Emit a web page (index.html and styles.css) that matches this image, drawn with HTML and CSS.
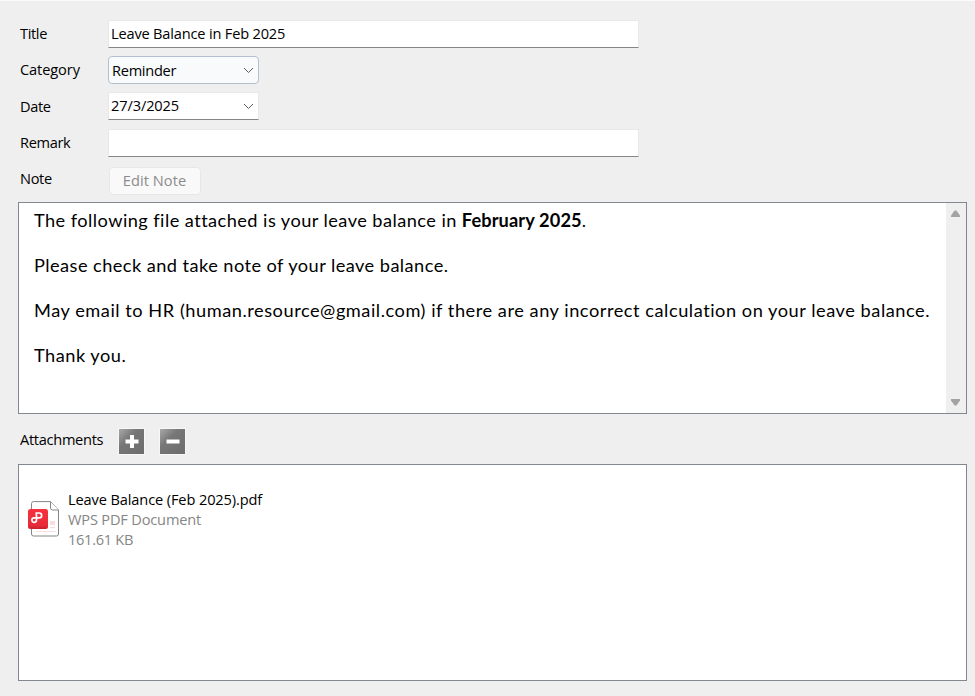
FILE: index.html
```
<!DOCTYPE html>
<html lang="en">
<head>
<meta charset="utf-8">
<title>Leave Balance</title>
<link rel="stylesheet" href="styles.css">
</head>
<body>
<main class="form">
  <div class="row title-row"><label class="label">Title</label><div class="field wide"><span class="t-title">Leave Balance in Feb 2025</span></div></div>
  <div class="row category-row"><label class="label t-category">Category</label><div class="select"><span class="t-reminder">Reminder</span><svg class="chevron" viewBox="0 0 11 7"><path d="M1 1l4.500 4.500L10 1"/></svg></div></div>
  <div class="row date-row"><label class="label">Date</label><div class="field date"><span class="t-date">27/3/2025</span><svg class="chevron" viewBox="0 0 11 7"><path d="M1 1l4.500 4.500L10 1"/></svg></div></div>
  <div class="row remark-row"><label class="label">Remark</label><div class="field wide"></div></div>
  <div class="row note-row"><label class="label">Note</label><button class="edit" disabled>Edit Note</button></div>

  <section class="note">
    <div class="note-body">
      <p><span class="n1">The following file attached is your leave balance in</span> <b>February 2025</b>.</p>
      <p><span class="n2">Please check and take note of your leave balance.</span></p>
      <p><span class="n3">May email to HR (human.resource@gmail.com) if there are any incorrect calculation on your leave balance.</span></p>
      <p><span class="n4">Thank you.</span></p>
    </div>
    <div class="scrollbar">
      <svg class="arrow" viewBox="0 0 9 7"><path d="M3.600.5h1.800L9 5.500V7H0V5.500z"/></svg>
      <svg class="arrow" viewBox="0 0 9 7"><path d="M3.600 6.500h1.800L9 1.500V0H0v1.500z"/></svg>
    </div>
  </section>

  <div class="attach-head">
    <span class="attach-label">Attachments</span>
    <button class="tool"><svg viewBox="0 0 25 25"><path d="M6.500 12.500h13M13 6v13"/></svg></button>
    <button class="tool"><svg viewBox="0 0 25 25"><path d="M6.500 12.500h13"/></svg></button>
  </div>

  <section class="files">
    <svg class="pdf" viewBox="0 0 32 36">
      <defs><linearGradient id="red" x2="0" y2="1"><stop offset="0" stop-color="#f7303e"/><stop offset=".82" stop-color="#e72b39"/><stop offset="1" stop-color="#c91f2c"/></linearGradient></defs>
      <path class="page" d="M5.500.6h17L30.500 9v24a2 2 0 0 1-2 2h-23a2 2 0 0 1-2-2V2.600a2 2 0 0 1 2-2z"/>
      <path class="fold" d="M22.500.8V7a2 2 0 0 0 2 2h6"/>
      <path class="lines" d="M8 30.500h19.500"/>
      <path class="block" d="M22 20h5v4h-5zM22 26h5v1.200h-5z"/>
      <rect y="8" width="20" height="20" rx="2.500" fill="url(#red)"/>
      <path class="mark" d="M8.100 16.800H6.200a2.300 2.300 0 1 0 2.300 2.300V14M8.300 14.500V12H11.200a2.400 2.400 0 0 1 0 4.900H8.300"/>
    </svg>
    <div class="meta"><span class="f1">Leave Balance (Feb 2025).pdf</span><span class="f2">WPS PDF Document</span><span class="f3">161.61 KB</span></div>
  </section>
</main>
</body>
</html>
```

FILE: styles.css
```
* { box-sizing: border-box; }
body { margin: 0; background: #efefef; color: #000; font: 14.6px/20px "Open Sans", "Noto Sans", sans-serif; letter-spacing: -.35px; }
.form { height: 696px; border-top: 1px solid #fbfbfb; padding: 19px 8px 15px 18px; display: flex; flex-direction: column; }
.row { display: flex; align-items: flex-start; flex: none; height: 36px; }
.remark-row, .date-row { height: 37px; }
.label { width: 90px; padding: 3px 0 0 2px; }
.date-row .label { padding-top: 4px; }
.note-row .label { padding-top: 2px; }
.t-category { letter-spacing: -.1px; }
.field { height: 28px; background: #fff; border: 1px solid #e8e8e8; border-bottom-color: #868686; display: flex; align-items: center; padding: 0 4px 2px 2px; }
.wide { width: 531px; }
.date { width: 151px; }
.t-title { letter-spacing: -.18px; }
.t-date { letter-spacing: -.12px; }
.t-reminder { letter-spacing: -.28px; }
.select { width: 151px; height: 28px; border: 1px solid #b3c1cf; border-radius: 4px; background: #f9fafc; display: flex; align-items: center; padding: 0 4px 0 3px; }
.chevron { width: 11px; height: 7px; margin-left: auto; fill: none; stroke: #5c5c5c; }
.date .chevron { position: relative; top: 1px; }
.edit { margin: 1px 0 0 1px; width: 92px; height: 28px; border: 1px solid #e7e7e7; border-radius: 4px; background: #f9f9f9; color: #8c8c8c; font: inherit; letter-spacing: .05px; padding: 0 1px 2px 0; }
.note { flex: none; height: 212px; border: 1px solid #828790; background: #fff; display: flex; }
.note-body { flex: 1; padding: 5px 0 0 15px; font: 18.200px/25px Lato, sans-serif; white-space: nowrap; letter-spacing: .3px; }
.note-body p { margin: 0 0 20px; }
.note-body b { letter-spacing: .130px; }
.n1, .n2 { letter-spacing: .445px; }
.n3 { letter-spacing: .538px; }
.n4 { letter-spacing: .5px; }
.scrollbar { width: 20px; background: #efefef; display: flex; flex-direction: column; justify-content: space-between; padding: 7px 0 7px 5px; }
.arrow { width: 9px; height: 7px; fill: #a3a3a3; }
.attach-head { height: 50px; display: flex; padding: 15px 0 0 2px; }
.attach-label { width: 99px; line-height: 20px; letter-spacing: -.3px; }
.tool { width: 25px; height: 25px; margin-right: 16px; padding: 0; border: 0; background: linear-gradient(135deg, #a8a8a8, #777 38%, #6c6c6c); box-shadow: 0 0 0 1px #f7f7f7; }
.tool svg { display: block; fill: none; stroke: #fff; stroke-width: 4; }
.files { flex: 1; border: 1px solid #828790; background: #fff; display: flex; padding: 24px 0 0 9px; }
.pdf { width: 32px; height: 36px; margin-top: 12px; }
.meta { display: flex; flex-direction: column; align-items: flex-start; margin-left: 8px; }
.f1 { letter-spacing: -.120px; }
.f2, .f3 { color: #868686; letter-spacing: -.180px; }
.f3 { letter-spacing: -.3px; }
.page { fill: #fff; stroke: #858585; }
.fold { fill: #fff; stroke: #858585; }
.lines { stroke: #fbdcdd; fill: none; }
.block { fill: #fbdcdd; }
.mark { fill: none; stroke: #fff; stroke-width: 1.700; }
```
